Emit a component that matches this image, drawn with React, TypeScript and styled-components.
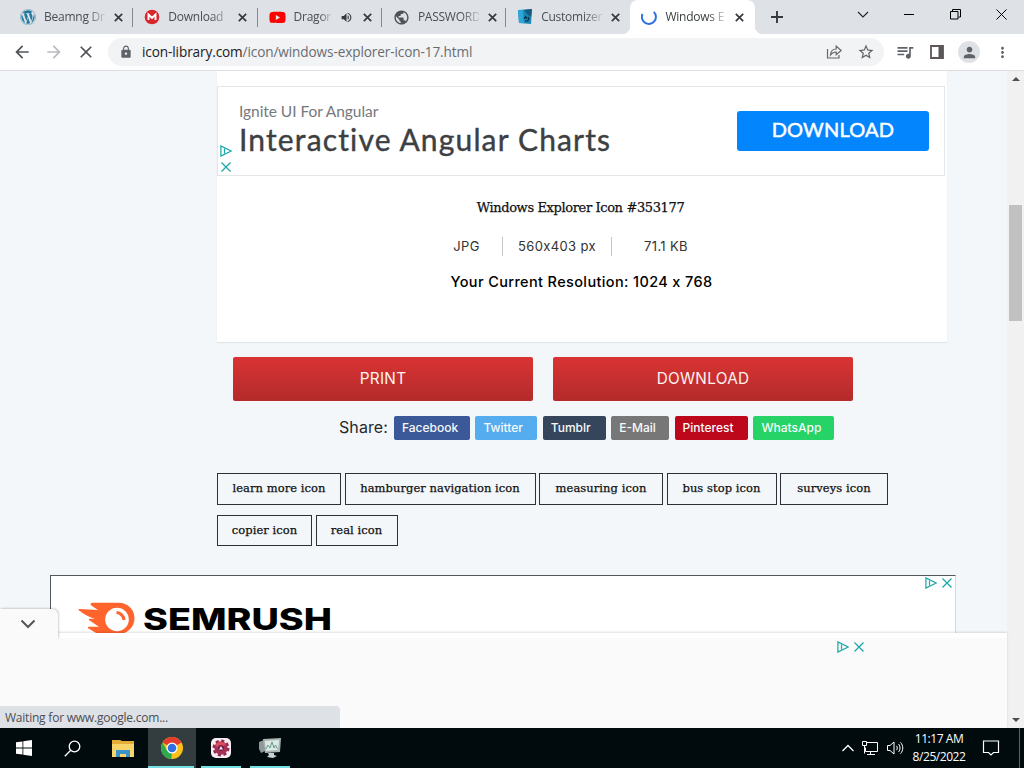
import * as React from "react";
import styled, { createGlobalStyle, css } from "styled-components";
import { FaWordpress, FaYoutube } from "react-icons/fa";
import {
  MdArrowBack,
  MdArrowForward,
  MdClose,
  MdLock,
  MdMoreVert,
  MdPerson,
  MdPublic,
  MdQueueMusic,
  MdStarBorder,
  MdVolumeUp
} from "react-icons/md";

const uiFont = `"Open Sans", "Noto Sans", sans-serif`;
const siteFont = `Inter, "Liberation Sans", sans-serif`;
const slabFont = `"DejaVu Serif", "Liberation Serif", serif`;

const GlobalStyle = createGlobalStyle`
  * {
    box-sizing: border-box;
  }

  body {
    margin: 0;
    overflow: hidden;
    font-family: ${uiFont};
  }

  svg {
    display: block;
    flex: none;
  }
`;

const Screen = styled.main`
  width: 1024px;
  height: 768px;
  display: flex;
  flex-direction: column;
  overflow: hidden;
`;

const TabStrip = styled.header`
  height: 34px;
  flex: none;
  display: flex;
  padding-left: 9px;
  background: #dee1e6;
`;

const TabBox = styled.div<{ $active?: boolean; $last?: boolean }>`
  width: 124.3px;
  flex: none;
  display: flex;
  align-items: center;
  padding-left: 11px;
  position: relative;
  color: ${p => (p.$active ? "#3c4043" : "#4a4e53")};
  border-radius: 8px 8px 0 0;
  background: ${p => (p.$active ? "white" : "transparent")};

  ${p =>
    !p.$active &&
    !p.$last &&
    css`
      &::after {
        content: "";
        position: absolute;
        right: 0;
        top: 8px;
        width: 1px;
        height: 19px;
        background: #85888d;
      }
    `}

  ${p =>
    p.$active &&
    css`
      &::before,
      &::after {
        content: "";
        position: absolute;
        bottom: 0;
        width: 8px;
        height: 8px;
      }
      &::before {
        left: -8px;
        background: radial-gradient(circle at 0 0, transparent 8px, white 8.5px);
      }
      &::after {
        right: -8px;
        background: radial-gradient(
          circle at 100% 0,
          transparent 8px,
          white 8.5px
        );
      }
    `}
`;

const TabTitle = styled.span<{ $width: number }>`
  width: ${p => p.$width}px;
  margin-left: 8px;
  overflow: hidden;
  white-space: nowrap;
  font-size: 12px;
  line-height: 18px;
  letter-spacing: -0.25px;
  mask-image: linear-gradient(to right, black 70%, rgba(0, 0, 0, 0.15) 100%);
`;

const TabEnd = styled.span`
  display: flex;
  align-items: center;
  gap: 10px;
  margin-left: 9px;
  color: #36393d;
`;

const NewTab = styled.div`
  margin: 10px 0 0 15px;
`;

const WindowButtons = styled.div`
  margin-left: auto;
  display: flex;
`;

const WindowButton = styled.div`
  width: 46px;
  height: 29px;
  display: flex;
  align-items: center;
  justify-content: center;
`;

const Toolbar = styled.nav`
  height: 37px;
  flex: none;
  display: flex;
  align-items: center;
  padding-left: 12px;
  background: white;
  border-bottom: 1px solid #dcdee1;
  color: #5f6368;
`;

const NavIcon = styled.span<{ $faded?: boolean }>`
  width: 32px;
  color: ${p => (p.$faded ? "#b9bbbe" : "#505357")};
`;

const AddressBar = styled.div`
  width: 776px;
  height: 28px;
  display: flex;
  align-items: center;
  padding: 0 9px 0 11px;
  border-radius: 14px;
  background: #f1f3f4;
`;

const Url = styled.span`
  margin-left: 9px;
  font-size: 13.6px;
  line-height: 18px;
  padding-bottom: 1px;
  letter-spacing: -0.11px;
  color: #696d72;
  white-space: nowrap;

  b {
    font-weight: 400;
    color: #202124;
  }
`;

const AddressActions = styled.span`
  margin-left: auto;
  display: flex;
  align-items: center;
  gap: 14px;
`;

const ToolbarActions = styled.div`
  display: flex;
  align-items: center;
  margin-left: 11px;
  gap: 13.5px;
`;

const Avatar = styled.span`
  width: 22px;
  height: 22px;
  display: flex;
  align-items: center;
  justify-content: center;
  border-radius: 50%;
  background: #dee1e6;
`;

const Viewport = styled.div`
  flex: 1;
  min-height: 0;
  display: flex;
  position: relative;
  background: #f3f7fa;
`;

const Site = styled.div`
  width: 1007px;
  overflow: hidden;
  font-family: ${siteFont};
`;

const Card = styled.section`
  width: 730px;
  height: 271px;
  margin-left: 217px;
  padding-top: 15px;
  background: white;
  box-shadow: 0 1px 1px #dfe4e6;
`;

const Banner = styled.div`
  width: 728px;
  height: 90px;
  display: flex;
  border: 1px solid #e3e5e6;
`;

const BannerMarks = styled.div`
  width: 15px;
  display: flex;
  flex-direction: column;
  justify-content: flex-end;
  align-items: center;
  gap: 4px;
  padding-bottom: 2px;
`;

const BannerText = styled.div`
  margin-left: 6px;
  padding-top: 15px;
  font-family: Lato, sans-serif;
  white-space: nowrap;
`;

const BannerKicker = styled.div`
  font-size: 15.5px;
  line-height: 18px;
  letter-spacing: -0.05px;
  color: #76797c;
`;

const BannerTitle = styled.div`
  margin-top: 1px;
  font-size: 30px;
  line-height: 36px;
  letter-spacing: 1.15px;
  color: #3c4043;
  -webkit-text-stroke: 0.4px #3c4043;
`;

const BannerButton = styled.div`
  width: 192px;
  height: 40px;
  margin: 24px 15px 0 auto;
  border-radius: 3px;
  background: #0385fd;
  color: white;
  font: 400 20px/37px Lato, sans-serif;
  letter-spacing: 0.2px;
  text-align: center;
  -webkit-text-stroke: 0.5px white;
`;

const IconName = styled.h1`
  margin: 23px 0 0;
  padding-right: 3px;
  font: 400 13px/18px ${slabFont};
  letter-spacing: -0.37px;
  text-align: center;
  color: #111;
  -webkit-text-stroke: 0.25px #111;
`;

const Facts = styled.div`
  height: 20px;
  margin: 19px 0 0 222px;
  display: flex;
  align-items: center;
  font-size: 13px;
  letter-spacing: 0.35px;
  color: #333;
`;

const Fact = styled.span<{ $width: number; $shift?: number; $divided?: boolean }>`
  width: ${p => p.$width}px;
  padding-right: ${p => p.$shift || 0}px;
  line-height: 19px;
  text-align: center;
  border-right: ${p => (p.$divided ? "1px solid #c4c6c8" : "none")};
`;

const Resolution = styled.p`
  margin: 16px 0 0;
  padding-right: 1px;
  font-size: 14.5px;
  line-height: 20px;
  font-weight: 500;
  letter-spacing: 0.37px;
  text-align: center;
  color: #000;
`;

const MainActions = styled.div`
  display: flex;
  gap: 20px;
  margin: 15px 0 0 233px;
`;

const RedButton = styled.div`
  width: 300px;
  height: 44px;
  border-radius: 2px;
  background: linear-gradient(#da3333, #b32b2b);
  color: #fff3f0;
  font-size: 15.3px;
  line-height: 44px;
  letter-spacing: 0.3px;
  text-align: center;
`;

const ShareRow = styled.div`
  display: flex;
  align-items: center;
  height: 24px;
  margin: 15px 0 0 339px;
`;

const ShareLabel = styled.span`
  width: 55px;
  padding-bottom: 2px;
  font-size: 16px;
  letter-spacing: 0.1px;
  color: #24282b;
`;

const ShareButton = styled.span<{ $color: string; $width: number }>`
  width: ${p => p.$width}px;
  height: 24px;
  margin-right: 5.4px;
  padding-left: 8px;
  border-radius: 2px;
  background: ${p => p.$color};
  color: #f7fafc;
  font-size: 12px;
  font-weight: 500;
  line-height: 24px;
`;

const Tags = styled.div`
  width: 700px;
  display: flex;
  flex-wrap: wrap;
  gap: 10px 3.5px;
  margin: 33px 0 0 217px;
`;

const Tag = styled.span<{ $width: number; $height: number }>`
  width: ${p => p.$width}px;
  height: ${p => p.$height}px;
  border: 1px solid #2b3136;
  font: 400 11.5px/29px ${slabFont};
  letter-spacing: 0.06px;
  text-align: center;
  white-space: nowrap;
  color: #111;
  -webkit-text-stroke: 0.25px #111;
`;

const SemrushAd = styled.section`
  width: 906px;
  height: 90px;
  display: flex;
  justify-content: space-between;
  align-items: flex-start;
  margin: 29px 0 0 50px;
  padding: 1px 2px 0 27px;
  border: 1px solid #55585b;
  border-right-color: #d5d9dc;
  background: white;

  > :first-child {
    margin-top: 25px;
  }
`;

const AdMarks = styled.span`
  display: flex;
  align-items: center;
  gap: 4px;
`;

/* sticky panel that lies over the bottom of the page */
const Anchor = styled.aside`
  position: absolute;
  left: 0;
  bottom: 0;
  width: 1007px;
  height: 95px;
  padding: 3px 142px 0 0;
  display: flex;
  justify-content: flex-end;
  align-items: flex-start;
  background: #fafafa;
  border-top: 5px solid white;
  box-shadow: 0 -1px 2px rgba(0, 0, 0, 0.12);
`;

const AnchorToggle = styled.div`
  position: absolute;
  left: 0;
  top: -29px;
  width: 58px;
  height: 30px;
  display: flex;
  align-items: center;
  justify-content: center;
  padding-right: 3px;
  border-radius: 0 6px 0 0;
  background: #fafafa;
  box-shadow: 1px -1px 2px rgba(0, 0, 0, 0.18);
`;

const Status = styled.div`
  position: absolute;
  left: 0;
  bottom: 0;
  width: 340px;
  height: 22px;
  padding-left: 5px;
  border-radius: 0 4px 0 0;
  background: #dee1e6;
  color: #4b4f54;
  font-size: 12px;
  line-height: 24px;
  letter-spacing: -0.22px;
`;

const Scrollbar = styled.div`
  width: 17px;
  display: flex;
  flex-direction: column;
  align-items: center;
  background: #f1f1f1;
`;

const Thumb = styled.div`
  width: 13px;
  height: 116px;
  margin: 118px 0 auto;
  background: #c1c1c1;
`;

const ScrollArrow = styled.div<{ $down?: boolean }>`
  height: 16px;
  display: flex;
  align-items: center;
  transform: ${p => (p.$down ? "rotate(180deg)" : "none")};
`;

const Taskbar = styled.footer`
  height: 40px;
  flex: none;
  display: flex;
  background: #010a0c;
  color: white;
`;

const TaskItem = styled.div<{ $width?: number; $state?: "open" | "focused" }>`
  width: ${p => p.$width || 49}px;
  display: flex;
  align-items: center;
  justify-content: center;
  background: ${p =>
    p.$state === "focused"
      ? "linear-gradient(#76dfe3, #76dfe3) 0 100% / 46px 2px no-repeat, #333d3f"
      : p.$state === "open"
      ? "linear-gradient(#76dfe3, #76dfe3) 50% 100% / 40px 2px no-repeat"
      : "none"};
`;

const Tray = styled.div`
  margin-left: auto;
  display: flex;
  align-items: center;
`;

const TrayIcons = styled.div`
  display: flex;
  align-items: center;
  gap: 7px;
`;

const Clock = styled.div`
  width: 70px;
  margin-right: 8px;
  font-size: 12px;
  line-height: 18px;
  letter-spacing: -0.45px;
  text-align: center;
`;

const ShowDesktop = styled.div`
  width: 5px;
  height: 40px;
  margin-left: 19px;
  border-left: 1px solid #5a6163;
`;

const MegaIcon = () => (
  <svg width="16" height="16" viewBox="0 0 16 16">
    <circle cx="8" cy="8" r="7.3" fill="#d9272e" />
    <path
      d="M4.5 11V5.5L8 9l3.5-3.5V11"
      fill="none"
      stroke="white"
      strokeWidth="1.9"
    />
  </svg>
);

const BinIcon = () => (
  <svg width="16" height="16" viewBox="0 0 16 16">
    <path d="M1 1l14-1-1 15L2 14z" fill="#1c86b5" />
    <path d="M1 1h5l1 13-5 0z" fill="#2ba7d8" />
    <path d="M7 1l8-1-1 8-4-3z" fill="#155a80" />
    <path
      d="M7 10l1.5-2.5L10 10M11 8l1 2-1.5 2H8"
      fill="none"
      stroke="#082c47"
      strokeWidth="1.2"
    />
  </svg>
);

const Spinner = () => (
  <svg width="16" height="16" viewBox="0 0 16 16" fill="none">
    <path d="M12.8 2.9A7 7 0 1 1 1.5 5" stroke="#2f6fe0" strokeWidth="2" />
  </svg>
);

const CloseIcon = () => (
  <svg width="9" height="9" viewBox="0 0 9 9">
    <path d="M.8.8l7.4 7.4M8.2.8L.8 8.2" stroke="currentColor" strokeWidth="1.7" />
  </svg>
);

const AdChoices = () => (
  <svg width="12" height="12" viewBox="0 0 12 12" fill="none" stroke="#16a5a8">
    <path d="M.9.9v10.2L11.3 6z" strokeWidth="1.2" />
    <path d="M4.5 3.500v5" strokeWidth="1.200" />
  </svg>
);

const AdClose = () => (
  <svg width="12" height="12" viewBox="0 0 12 12" stroke="#16a5a8">
    <path d="M1.5 1.5l9 9M10.5 1.5l-9 9" strokeWidth="1.2" />
  </svg>
);

const ShareIcon = () => (
  <svg
    width="17"
    height="16"
    viewBox="0 0 17 16"
    fill="none"
    stroke="#66696d"
    strokeWidth="1.2"
  >
    <path d="M1.5 5v9h11.5v-3" />
    <path d="M4.5 11C4.8 7 7 5 10.2 5V2l5 4.5-5 4.3V8C7.5 8 6 9 4.5 11z" />
  </svg>
);

const SidePanelIcon = () => (
  <svg width="16" height="16" viewBox="0 0 16 16">
    <path d="M2 2h12v12H2z" fill="none" stroke="#5b5658" strokeWidth="1.8" />
    <path d="M9.5 2H14v12H9.5z" fill="#5b5658" />
  </svg>
);

const SemrushLogo = () => (
  <svg width="255" height="34" viewBox="0 0 255 34">
    <path
      d="M14 .8h27a15.500 15.500 0 0 1 0 31H21c-2 0-3-1-5-2l-5-3c-2-1-1-2 0-2h10l-9-6c-2-1-1-2 0-2h5C11 15 5 12 .5 8 0 7 1 7 2 7l18 1-6-4c-2-1-2-3 0-3z"
      fill="#ff642d"
    />
    <circle cx="39" cy="17.500" r="11.800" fill="white" />
    <path
      d="M38.500 10.500a8 8 0 0 1 7.500 7.500"
      stroke="#ff642d"
      strokeWidth="3"
      fill="none"
    />
    <text
      x="65"
      y="27.500"
      fontFamily="Inter, sans-serif"
      fontSize="29.5"
      fontWeight="800"
      textLength="189"
      lengthAdjust="spacingAndGlyphs"
    >
      SEMRUSH
    </text>
  </svg>
);

const WindowsIcon = () => (
  <svg width="16" height="16" viewBox="0 0 16 16" fill="white">
    <path d="M0 2.300l6.500-.9v6.200H0zM7.300 1.300L16 0v7.600H7.300zM0 8.400h6.500v6.200L0 13.700zM7.300 8.400H16V16l-8.700-1.200z" />
  </svg>
);

const SearchIcon = () => (
  <svg width="17" height="17" viewBox="0 0 17 17" fill="none" stroke="white">
    <circle cx="10.5" cy="6.5" r="5.3" strokeWidth="1.3" />
    <path d="M6.700 10.300L.8 16.200" strokeWidth="1.3" />
  </svg>
);

const FolderIcon = () => (
  <svg width="22" height="19" viewBox="0 0 22 19">
    <path d="M0 1h8l2 1h12v16H0z" fill="#e5ac36" />
    <path d="M0 5h22v13H0z" fill="#f8d56b" />
    <path d="M4 11h14v7h-4v-3H8v3H4z" fill="#3b92c9" />
    <path d="M9 15h4v3H9z" fill="#f8d56b" />
  </svg>
);

const ChromeIcon = () => (
  <svg width="24" height="24" viewBox="0 0 24 24">
    <circle cx="12" cy="12" r="11" fill="#fbc116" />
    <path d="M12 12L2.500 6.500a11 11 0 0 1 19 0z" fill="#e33b2e" />
    <path
      d="M2.500 6.500L7.200 14.700l4.800 2.300-.8 6A11 11 0 0 1 2.500 6.500z"
      fill="#2da94f"
    />
    <circle cx="12" cy="12" r="5.5" fill="white" />
    <circle cx="12" cy="12" r="4.3" fill="#2d6fe4" />
  </svg>
);

const GearAppIcon = () => (
  <svg width="20" height="20" viewBox="0 0 20 20">
    <rect width="20" height="20" rx="5" fill="#f8eef2" />
    <circle
      cx="10"
      cy="10"
      r="7"
      fill="none"
      stroke="#8d2b55"
      strokeWidth="3"
      strokeDasharray="3 2.5"
    />
    <circle cx="10" cy="10" r="6.7" fill="#a82f55" />
    <path d="M4 8a6.500 6.500 0 0 1 11-2l-5 4z" fill="#e04b5a" />
    <circle cx="10" cy="10" r="3" fill="#6d2350" />
    <path d="M10 8l2 3.500H8z" fill="#fbe3e6" />
  </svg>
);

const MonitorAppIcon = () => (
  <svg width="24" height="22" viewBox="0 0 24 22">
    <path d="M1 5l5-2 1 11-4 2-2-4z" fill="#8d9899" />
    <path d="M5 2l18-1-1 14-15 1z" fill="#a9b4b3" />
    <path d="M7 4l14-1-1 10-12 1z" fill="#dce8e4" />
    <path
      d="M8 12l2-4 2 3 2-6 2 6 1.500-3 2 4"
      fill="none"
      stroke="#5b9488"
      strokeWidth=".9"
    />
    <path d="M10 16h6v2l3 1-4 2-6-1 2-2z" fill="#cdd2d1" />
  </svg>
);

const NetworkIcon = () => (
  <svg width="18" height="16" viewBox="0 0 18 16" fill="none" stroke="white">
    <path d="M5.500 2.500h11v9H4.500v-4M9.500 12v2.500M6 14.500h8M1.500 1.500h4v4h-4zM3.500 5.500v8" />
  </svg>
);

const SpeakerIcon = () => (
  <svg width="18" height="16" viewBox="0 0 18 16" fill="none" stroke="white">
    <path d="M1.500 5.500h2.500l4-3.500v12l-4-3.500H1.500zM10.500 5.800c1 1.300 1 3.100 0 4.400M12.500 4c2 2.300 2 5.700 0 8M14.500 2.300c3 3.300 3 8.100 0 11.400" />
  </svg>
);

const NoticeIcon = () => (
  <svg width="18" height="18" viewBox="0 0 18 18" fill="none" stroke="white">
    <path d="M1.500 2h15v11.500h-5L9 16l-2.500-2.500h-5z" strokeWidth="1.2" />
  </svg>
);

const tabs = [
  { title: "Beamng Dr", icon: <FaWordpress size={16} color="#24799f" /> },
  { title: "Download", icon: <MegaIcon /> },
  {
    title: "Dragon",
    icon: <FaYoutube size={17} color="#ff0000" />,
    playing: true
  },
  { title: "PASSWORD", icon: <MdPublic size={17} color="#505357" /> },
  { title: "Customizer", icon: <BinIcon /> },
  { title: "Windows E", icon: <Spinner />, active: true }
];

const shares = [
  { label: "Facebook", color: "#3b5998", width: 76 },
  { label: "Twitter", color: "#55acee", width: 62 },
  { label: "Tumblr", color: "#35465c", width: 63 },
  { label: "E-Mail", color: "#777777", width: 58 },
  { label: "Pinterest", color: "#bd081c", width: 73.5 },
  { label: "WhatsApp", color: "#25d366", width: 81 }
];

const tags = [
  { label: "learn more icon", width: 124 },
  { label: "hamburger navigation icon", width: 191 },
  { label: "measuring icon", width: 124 },
  { label: "bus stop icon", width: 110 },
  { label: "surveys icon", width: 108 },
  { label: "copier icon", width: 95, height: 31 },
  { label: "real icon", width: 82, height: 31 }
];

const Tabs = () => (
  <TabStrip>
    {tabs.map((tab, i) => (
      <TabBox key={tab.title} $active={tab.active} $last={i === 4}>
        {tab.icon}
        <TabTitle $width={tab.playing ? 37 : 61}>{tab.title}</TabTitle>
        <TabEnd>
          {tab.playing && <MdVolumeUp size={13} />}
          <CloseIcon />
        </TabEnd>
      </TabBox>
    ))}
    <NewTab>
      <svg width="14" height="14" viewBox="0 0 14 14">
        <path d="M7 1v12M1 7h12" stroke="#36393d" strokeWidth="1.9" />
      </svg>
    </NewTab>
    <WindowButtons>
      <WindowButton>
        <svg width="12" height="8" viewBox="0 0 12 8" fill="none">
          <path d="M1 1l5 5 5-5" stroke="#222" strokeWidth="1.1" />
        </svg>
      </WindowButton>
      <WindowButton>
        <svg width="10" height="3" viewBox="0 0 10 3">
          <path d="M0 1.5h10" stroke="black" />
        </svg>
      </WindowButton>
      <WindowButton>
        <svg width="11" height="11" viewBox="0 0 11 11" fill="none">
          <path d="M.5 2.500h7.500v7.500H.5zM2.500 2.500v-2h8v7.500h-2" stroke="black" />
        </svg>
      </WindowButton>
      <WindowButton>
        <svg width="11" height="11" viewBox="0 0 11 11">
          <path d="M.5.5l10 10M10.500.5l-10 10" stroke="black" />
        </svg>
      </WindowButton>
    </WindowButtons>
  </TabStrip>
);

const BrowserToolbar = () => (
  <Toolbar>
    <NavIcon>
      <MdArrowBack size={20} />
    </NavIcon>
    <NavIcon $faded>
      <MdArrowForward size={20} />
    </NavIcon>
    <NavIcon>
      <MdClose size={20} />
    </NavIcon>
    <AddressBar>
      <MdLock size={14} />
      <Url>
        <b>icon-library.com</b>/icon/windows-explorer-icon-17.html
      </Url>
      <AddressActions>
        <ShareIcon />
        <MdStarBorder size={18} />
      </AddressActions>
    </AddressBar>
    <ToolbarActions>
      <MdQueueMusic size={20} />
      <SidePanelIcon />
      <Avatar>
        <MdPerson size={17} />
      </Avatar>
      <MdMoreVert size={17} />
    </ToolbarActions>
  </Toolbar>
);

const SitePage = () => (
  <Site>
    <Card>
      <Banner>
        <BannerMarks>
          <AdChoices />
          <AdClose />
        </BannerMarks>
        <BannerText>
          <BannerKicker>Ignite UI For Angular</BannerKicker>
          <BannerTitle>Interactive Angular Charts</BannerTitle>
        </BannerText>
        <BannerButton>DOWNLOAD</BannerButton>
      </Banner>
      <IconName>Windows Explorer Icon #353177</IconName>
      <Facts>
        <Fact $width={64} $shift={8} $divided>
          JPG
        </Fact>
        <Fact $width={109} $divided>
          560x403 px
        </Fact>
        <Fact $width={108}>71.1 KB</Fact>
      </Facts>
      <Resolution>Your Current Resolution: 1024 x 768</Resolution>
    </Card>
    <MainActions>
      <RedButton>PRINT</RedButton>
      <RedButton>DOWNLOAD</RedButton>
    </MainActions>
    <ShareRow>
      <ShareLabel>Share:</ShareLabel>
      {shares.map(s => (
        <ShareButton key={s.label} $color={s.color} $width={s.width}>
          {s.label}
        </ShareButton>
      ))}
    </ShareRow>
    <Tags>
      {tags.map(t => (
        <Tag key={t.label} $width={t.width} $height={t.height || 32}>
          {t.label}
        </Tag>
      ))}
    </Tags>
    <SemrushAd>
      <SemrushLogo />
      <AdMarks>
        <AdChoices />
        <AdClose />
      </AdMarks>
    </SemrushAd>
  </Site>
);

const ArrowGlyph = () => (
  <svg width="8" height="4" viewBox="0 0 8 4">
    <path d="M4 0l4 4H0z" fill="#4c4f52" />
  </svg>
);

export default function App() {
  return (
    <Screen>
      <GlobalStyle />
      <Tabs />
      <BrowserToolbar />
      <Viewport>
        <SitePage />
        <Scrollbar>
          <ScrollArrow>
            <ArrowGlyph />
          </ScrollArrow>
          <Thumb />
          <ScrollArrow $down>
            <ArrowGlyph />
          </ScrollArrow>
        </Scrollbar>
        <Anchor>
          <AnchorToggle>
            <svg width="16" height="10" viewBox="0 0 16 10" fill="none">
              <path d="M1.500 1.500L8 8l6.500-6.500" stroke="#555" strokeWidth="2" />
            </svg>
          </AnchorToggle>
          <AdMarks>
            <AdChoices />
            <AdClose />
          </AdMarks>
        </Anchor>
        <Status>Waiting for www.google.com...</Status>
      </Viewport>
      <Taskbar>
        <TaskItem $width={48}>
          <WindowsIcon />
        </TaskItem>
        <TaskItem $width={49}>
          <SearchIcon />
        </TaskItem>
        <TaskItem $width={51}>
          <FolderIcon />
        </TaskItem>
        <TaskItem $width={48} $state="focused">
          <ChromeIcon />
        </TaskItem>
        <TaskItem $width={50} $state="open">
          <GearAppIcon />
        </TaskItem>
        <TaskItem $width={48} $state="open">
          <MonitorAppIcon />
        </TaskItem>
        <Tray>
          <TrayIcons>
            <svg width="12" height="8" viewBox="0 0 12 8" fill="none">
              <path d="M.5 7L6 1.500 11.500 7" stroke="white" strokeWidth="1.3" />
            </svg>
            <NetworkIcon />
            <SpeakerIcon />
          </TrayIcons>
          <Clock>
            11:17 AM
            <br />
            8/25/2022
          </Clock>
          <NoticeIcon />
          <ShowDesktop />
        </Tray>
      </Taskbar>
    </Screen>
  );
}
